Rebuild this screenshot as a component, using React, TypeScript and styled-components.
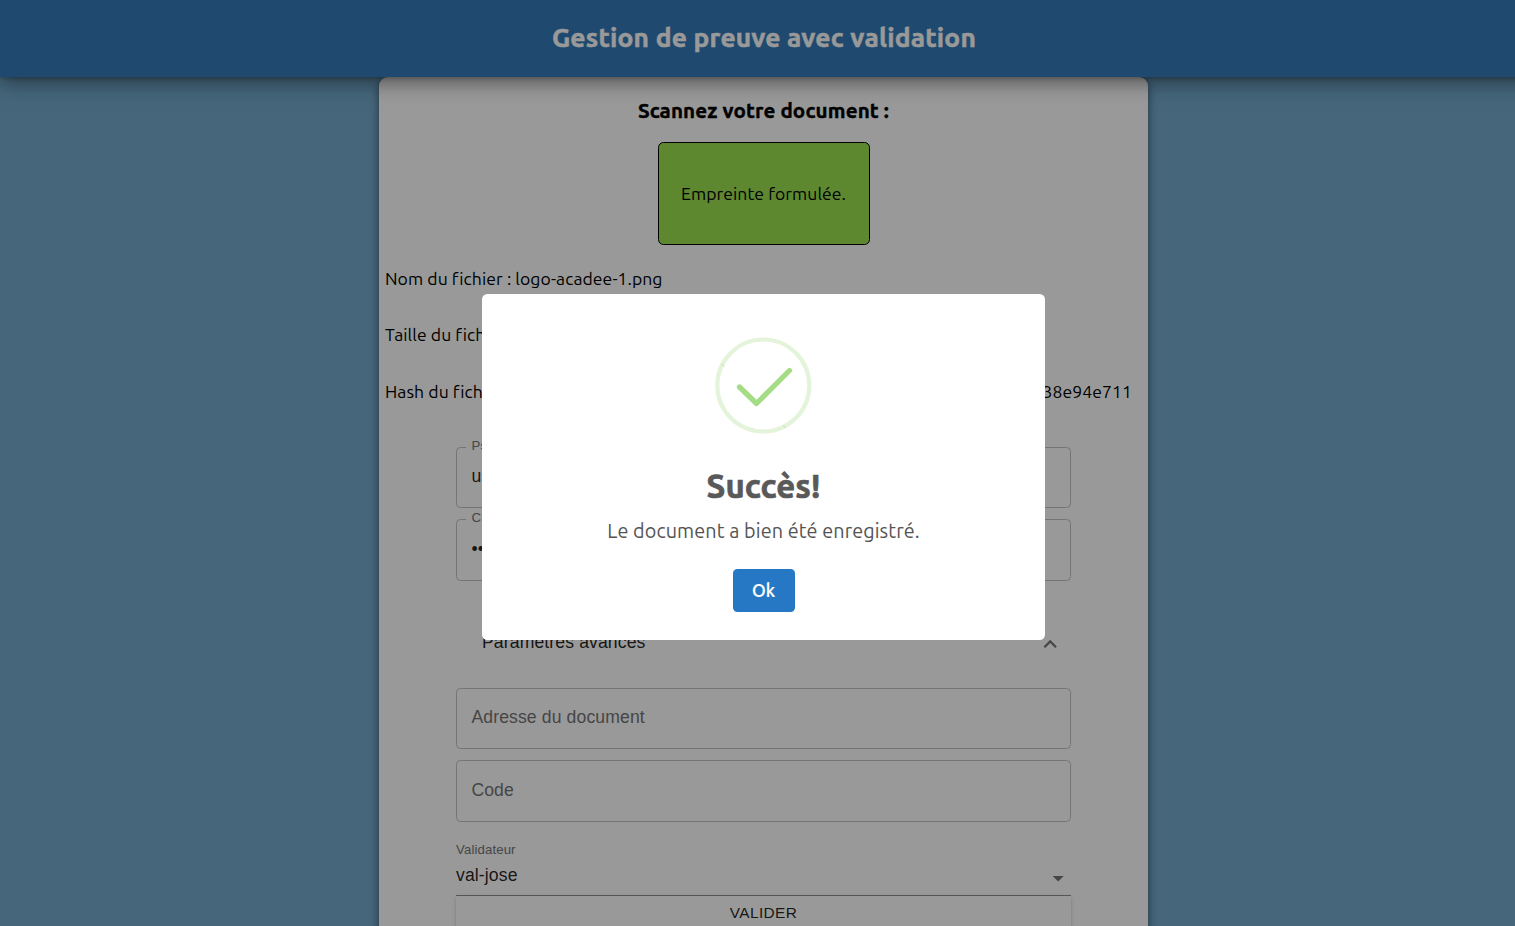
import React from "react";
import styled, { createGlobalStyle } from "styled-components";

const GlobalStyle = createGlobalStyle`
  *, *::before, *::after { box-sizing: border-box; }
  html, body { margin: 0; height: 100%; overflow: hidden; }
  body {
    background: #73aacd;
    font-family: Ubuntu, "Noto Sans", sans-serif;
    font-size: 17.6px;
    letter-spacing: 0.06px;
    color: #000;
  }
`;

const Page = styled.div`
  height: 100vh;
  width: 100%;
  padding-left: 12px;
  display: flex;
  flex-direction: column;
  align-items: center;
  overflow: hidden;
`;

const Header = styled.header`
  flex: none;
  align-self: flex-start;
  width: calc(100% + 60px);
  margin-left: -12px;
  height: 77.4px;
  display: flex;
  align-items: center;
  justify-content: center;
  padding: 0 35px 3px 0;
  background: #357bb9;
  position: relative;
  z-index: 1;
  box-shadow: 0 2px 4px -1px rgba(0, 0, 0, 0.2), 0 4px 20px rgba(0, 0, 0, 0.5);
`;

const Heading = styled.h1`
  margin: 0;
  font-size: 26.4px;
  line-height: 36px;
  color: #fff;
  white-space: nowrap;
  letter-spacing: 0.2px;
  -webkit-text-stroke: 0.5px currentColor;
`;

const Panel = styled.main`
  flex: none;
  width: 769px;
  height: 900px;
  background: #fff;
  border-radius: 9px;
  box-shadow: 0 2px 9px rgba(0, 0, 0, 0.5);
  display: flex;
  flex-direction: column;
`;

const ScanTitle = styled.h2`
  margin: 0;
  height: 65px;
  padding-top: 20px;
  text-align: center;
  font-size: 20.6px;
  line-height: 28px;
  letter-spacing: 0.13px;
  -webkit-text-stroke: 0.4px currentColor;
`;

const DropZone = styled.div`
  align-self: center;
  width: 212px;
  height: 102.6px;
  border: 1.1px solid #000;
  border-radius: 5.5px;
  background: #9de350;
  display: flex;
  align-items: center;
  justify-content: center;
`;

const FileInfo = styled.section`
  margin-top: 5px;
  padding: 0 16px 0 6px;
`;

const InfoRow = styled.div`
  height: 56.5px;
  display: flex;
  align-items: center;
  justify-content: space-between;
  white-space: nowrap;
`;

const Form = styled.form`
  width: 615px;
  margin: 27.15px auto 0;
  font-family: "Liberation Sans", Arial, sans-serif;
  font-size: 17.6px;
  letter-spacing: 0.12px;
`;

const Field = styled.div<{ $gap?: number }>`
  position: relative;
  height: 61.6px;
  margin-bottom: ${(p) => p.$gap ?? 11}px;
  padding: 0 14.4px 2px;
  border: 1px solid #c4c4c4;
  border-radius: 4.4px;
  display: flex;
  align-items: center;
  color: rgba(0, 0, 0, 0.87);
`;

const FloatingLabel = styled.label`
  position: absolute;
  left: 9px;
  top: -10px;
  padding: 0 5.5px;
  background: #fff;
  font-size: 13.2px;
  line-height: 16px;
  color: #757575;
`;

const Placeholder = styled.span`
  color: #757575;
`;

const Accordion = styled.div`
  height: 106.8px;
  padding: 17px 8px 0 26px;
  display: flex;
  align-items: center;
  justify-content: space-between;
  color: rgba(0, 0, 0, 0.87);
`;

const SelectField = styled.div`
  height: 74px;
  padding-top: 20.2px;
  border-bottom: 1px solid #949494;
`;

const SelectLabel = styled.div`
  height: 16px;
  font-size: 13.2px;
  line-height: 16px;
  color: #757575;
`;

const SelectValue = styled.div`
  height: 35px;
  display: flex;
  align-items: center;
  justify-content: space-between;
  color: rgba(0, 0, 0, 0.87);
`;

const Submit = styled.button`
  display: block;
  width: 100%;
  height: 40px;
  padding: 0 0 5px;
  border: 0;
  border-radius: 0 0 4px 4px;
  background: #fff;
  font-family: inherit;
  font-size: 15.4px;
  letter-spacing: 0.4px;
  color: rgba(0, 0, 0, 0.87);
  box-shadow: 0 3px 1px -2px rgba(0, 0, 0, 0.2), 0 2px 2px rgba(0, 0, 0, 0.14),
    0 1px 5px rgba(0, 0, 0, 0.12);
`;

const Backdrop = styled.div`
  position: fixed;
  inset: 0;
  z-index: 10;
  padding: 8px 0 0 12px;
  background: rgba(0, 0, 0, 0.4);
  display: flex;
  align-items: center;
  justify-content: center;
`;

const Dialog = styled.div`
  width: 563px;
  height: 346px;
  padding-top: 43px;
  border-radius: 5.5px;
  background: #fff;
  display: flex;
  flex-direction: column;
  align-items: center;
`;

const DialogTitle = styled.h2`
  margin: 29px 0 0;
  font-size: 33px;
  line-height: 46px;
  color: #595959;
  letter-spacing: 0.1px;
  -webkit-text-stroke: 0.7px currentColor;
`;

const DialogText = styled.p`
  margin: 8px 0 0;
  font-size: 19.8px;
  line-height: 28px;
  color: #545454;
  letter-spacing: 0.1px;
`;

const Confirm = styled.button`
  margin-top: 24px;
  width: 62px;
  height: 43px;
  padding: 0;
  border: 0;
  border-radius: 4.4px;
  background: #2778c4;
  color: #fff;
  font-family: inherit;
  font-weight: 500;
  font-size: 17.6px;
  -webkit-text-stroke: 0.2px currentColor;
`;

const ChevronSvg = styled.svg`
  margin-top: 2px;
`;

const ArrowSvg = styled.svg`
  margin-top: 6px;
`;

const Chevron = () => (
  <ChevronSvg width="26.4" height="26.4" viewBox="0 0 24 24" fill="rgba(0,0,0,0.54)">
    <path d="M12 8l-6 6 1.41 1.41L12 10.83l4.59 4.58L18 14z" />
  </ChevronSvg>
);

const Arrow = () => (
  <ArrowSvg width="26.4" height="26.4" viewBox="0 0 24 24" fill="rgba(0,0,0,0.54)">
    <path d="M7 10l5 5 5-5z" />
  </ArrowSvg>
);

const SuccessIcon = () => (
  <svg width="97" height="97" viewBox="0 0 97 97" fill="none">
    <circle cx="48.3" cy="48.5" r="46" stroke="#a5dc86" strokeOpacity="0.3" strokeWidth="4.2" />
    <path d="M6.3 27l3 2.5M68 88.5l3 2.5" stroke="#a5dc86" strokeOpacity="0.7" strokeWidth="0.9" />
    <path d="M24.5 50L41.5 66.5L74.5 33.5" stroke="#a5dc86" strokeWidth="5.3" strokeLinecap="round" strokeLinejoin="round" />
  </svg>
);

export default function App() {
  return (
    <>
      <GlobalStyle />
      <Page>
        <Header>
          <Heading>Gestion de preuve avec validation</Heading>
        </Header>
        <Panel>
          <ScanTitle>Scannez votre document :</ScanTitle>
          <DropZone>Empreinte formulée.</DropZone>
          <FileInfo>
            <InfoRow>Nom du fichier : logo-acadee-1.png</InfoRow>
            <InfoRow>Taille du fichier :</InfoRow>
            <InfoRow>
              <span>Hash du fichier :</span>
              <span>38e94e711</span>
            </InfoRow>
          </FileInfo>
          <Form>
            <Field>
              <FloatingLabel>Pseudo</FloatingLabel>
              user
            </Field>
            <Field $gap={0}>
              <FloatingLabel>Clé</FloatingLabel>
              ••••••••
            </Field>
            <Accordion>
              <span>Paramètres avancés</span>
              <Chevron />
            </Accordion>
            <Field>
              <Placeholder>Adresse du document</Placeholder>
            </Field>
            <Field $gap={0}>
              <Placeholder>Code</Placeholder>
            </Field>
            <SelectField>
              <SelectLabel>Validateur</SelectLabel>
              <SelectValue>
                val-jose
                <Arrow />
              </SelectValue>
            </SelectField>
            <Submit type="button">VALIDER</Submit>
          </Form>
        </Panel>
      </Page>
      <Backdrop>
        <Dialog role="dialog">
          <SuccessIcon />
          <DialogTitle>Succès!</DialogTitle>
          <DialogText>Le document a bien été enregistré.</DialogText>
          <Confirm>Ok</Confirm>
        </Dialog>
      </Backdrop>
    </>
  );
}
